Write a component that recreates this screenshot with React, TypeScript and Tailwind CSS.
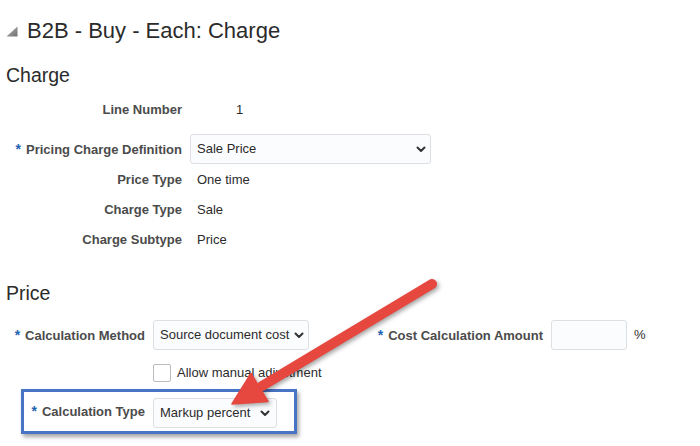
import React from "react";

const LABEL = "font-bold text-[13px] text-[#4b4b4b]";

function Req() {
  return <span className="text-[#1f63b0] text-[14px] font-bold mr-[5px]">*</span>;
}

function Chevron() {
  return (
    <svg width="10" height="7" viewBox="0 0 10 7" className="shrink-0">
      <path d="M1.5 1.5 L5 5 L8.5 1.5" fill="none" stroke="#333" strokeWidth="2" strokeLinecap="round" strokeLinejoin="round" />
    </svg>
  );
}

function Select({ text, className }: { text: string; className: string }) {
  return (
    <div
      className={
        "flex items-center justify-between border border-[#dcdfe3] bg-[#fbfcfd] rounded-[3px] pl-[6px] text-[13px] text-[#2b2b2b] " +
        className
      }
    >
      <span className="whitespace-nowrap">{text}</span>
      <Chevron />
    </div>
  );
}

export default function App() {
  return (
    <div className="relative w-[700px] h-[446px] overflow-hidden bg-white font-['Liberation_Sans',Arial,sans-serif] text-[#2b2b2b]">
      {/* Section title with disclosure triangle */}
      <div className="flex items-center h-[26px] mt-[18px] pl-[6px]">
        <svg width="12" height="11" viewBox="0 0 12 11">
          <defs>
            <linearGradient id="tri" x1="0" y1="0" x2="1" y2="1">
              <stop offset="0" stopColor="#b5b5b5" />
              <stop offset="1" stopColor="#6f6f6f" />
            </linearGradient>
          </defs>
          <polygon points="11.5,0.5 11.5,10.5 0.5,10.5" fill="url(#tri)" />
        </svg>
        <span className="ml-[9px] text-[22px] leading-[26px] text-[#2b2b2b]">B2B - Buy - Each: Charge</span>
      </div>

      {/* Charge */}
      <div className="mt-[19px] pl-[6px] text-[19.5px] leading-[24px] text-[#2b2b2b]">Charge</div>

      <div className="mt-[8px] flex flex-col">
        <div className="flex items-center h-[30px]">
          <div className={"w-[182px] text-right " + LABEL}>Line Number</div>
          <div className="ml-[8px] pl-[46px] text-[13px]">1</div>
        </div>
        <div className="flex items-center h-[36px] mt-[6px]">
          <div className={"w-[182px] text-right " + LABEL}>
            <Req />
            Pricing Charge Definition
          </div>
          <Select text="Sale Price" className="ml-[8px] w-[241px] h-[30px] pr-[4px]" />
        </div>
        <div className="flex items-center h-[26px]">
          <div className={"w-[182px] text-right " + LABEL}>Price Type</div>
          <div className="ml-[8px] pl-[7px] text-[13px]">One time</div>
        </div>
        <div className="flex items-center h-[34px]">
          <div className={"w-[182px] text-right " + LABEL}>Charge Type</div>
          <div className="ml-[8px] pl-[7px] text-[13px]">Sale</div>
        </div>
        <div className="flex items-center h-[26px]">
          <div className={"w-[182px] text-right " + LABEL}>Charge Subtype</div>
          <div className="ml-[8px] pl-[7px] text-[13px]">Price</div>
        </div>
      </div>

      {/* Price */}
      <div className="mt-[28px] pl-[6px] text-[19.5px] leading-[24px] text-[#2b2b2b]">Price</div>

      <div className="mt-[15px] flex items-center h-[30px]">
        <div className={"w-[145px] text-right " + LABEL}>
          <Req />
          Calculation Method
        </div>
        <Select text="Source document cost" className="ml-[8px] w-[156px] h-[30px] pr-[4px]" />
        <div className={"w-[234px] text-right " + LABEL}>
          <Req />
          Cost Calculation Amount
        </div>
        <div className="ml-[8px] w-[76px] h-[30px] border border-[#dcdfe3] bg-[#fbfcfd] rounded-[3px]" />
        <div className="ml-[7px] text-[13px] text-[#2b2b2b]">%</div>
      </div>

      <div className="mt-[14px] flex items-center h-[18px] pl-[153px]">
        <div className="w-[18px] h-[18px] border border-[#b9bcc0] rounded-[2px] bg-white" />
        <span className="ml-[6px] text-[13px] text-[#2b2b2b]">Allow manual adjustment</span>
      </div>

      <div className="mt-[7px] ml-[21px] w-[276px] h-[45px] border-[3px] border-[#4874c6] flex items-center shadow-[2px_3px_4px_rgba(0,0,0,0.35)]">
        <div className={"w-[121px] text-right " + LABEL}>
          <Req />
          Calculation Type
        </div>
        <Select text="Markup percent" className="ml-[8px] w-[124px] h-[30px] pr-[6px] mt-[3px]" />
      </div>

      {/* Callout arrow */}
      <svg
        width="700"
        height="446"
        viewBox="0 0 700 446"
        className="absolute inset-0 pointer-events-none"
        style={{ filter: "drop-shadow(2px 2px 2px rgba(0,0,0,0.35))" }}
      >
        <line x1="432" y1="284" x2="262" y2="386" stroke="#e6473f" strokeWidth="10" strokeLinecap="round" />
        <polygon points="232,404 251,373.5 268,401.5" fill="#e6473f" stroke="#e6473f" strokeWidth="1.5" strokeLinejoin="round" />
      </svg>
    </div>
  );
}
